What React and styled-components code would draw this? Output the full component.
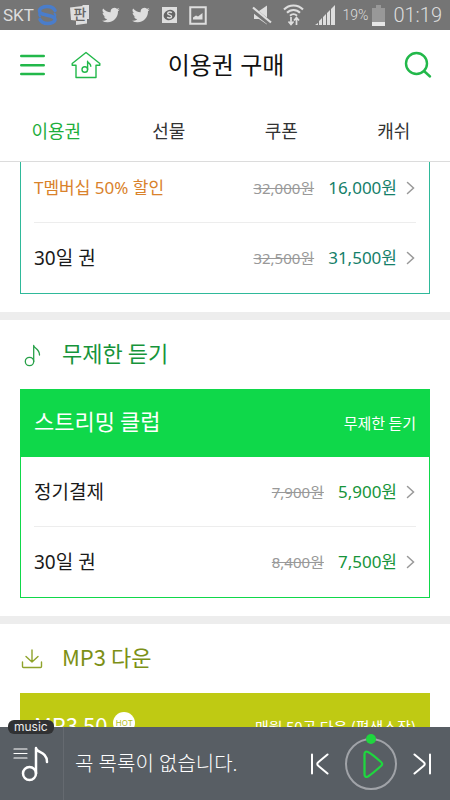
import React from "react";
import styled, { createGlobalStyle } from "styled-components";

const GlobalStyle = createGlobalStyle`
  *, *::before, *::after { box-sizing: border-box; }
  body {
    margin: 0;
    background: #fff;
    color: #1a1a1a;
    font-family: "Noto Sans", "Noto Sans CJK KR", sans-serif;
  }
  button { border: 0; padding: 0; background: none; font: inherit; color: inherit; cursor: pointer; }
  a { color: inherit; text-decoration: none; }
  h1, h2, h3, ul { margin: 0; padding: 0; font: inherit; }
  svg { display: block; flex: none; }
`;

const Screen = styled.div`
  display: flex;
  flex-direction: column;
  height: 100vh;
`;

const StatusBar = styled.div`
  display: flex;
  flex: none;
  align-items: center;
  justify-content: space-between;
  height: 30px;
  padding: 0 8px 0 3px;
  background: #757575;
  color: #dedede;
  font-family: Roboto, sans-serif;
  line-height: 20px;
`;

const StatusGroup = styled.div`
  display: flex;
  align-items: center;
  gap: ${(p) => p.$gap}px;
`;

const Carrier = styled.span`
  font-size: 17px;
`;

const BatteryLevel = styled.span`
  margin-left: 4px;
  font-size: 14px;
  font-weight: 300;
`;

const Clock = styled.time`
  margin-left: 4px;
  font-size: 20px;
  font-weight: 300;
`;

const Header = styled.header`
  flex: none;
  border-bottom: 1px solid #dcdcdc;
`;

const TitleBar = styled.div`
  display: grid;
  grid-template-columns: 1fr auto 1fr;
  align-items: center;
  height: 70px;
  padding: 0 18px 0 20px;
`;

const TitleActions = styled.div`
  display: flex;
  align-items: center;
  justify-content: ${(p) => (p.$end ? "flex-end" : "flex-start")};
  gap: 26px;
`;

const PageTitle = styled.h1`
  font-size: 24px;
  line-height: 32px;
  color: #111;
`;

const Tabs = styled.nav`
  display: grid;
  grid-template-columns: repeat(4, 1fr);
  height: 61px;
  padding-bottom: 2px;
`;

const Tab = styled.a`
  display: flex;
  align-items: center;
  justify-content: center;
  font-size: 18px;
  color: ${(p) => (p.$active ? "#1eae3c" : "#333")};
`;

const Content = styled.main`
  flex: 1;
  min-height: 0;
  overflow-y: auto;
  scrollbar-width: none;
`;

const Section = styled.section`
  padding: 0 20px 18px;
  margin-top: ${(p) => (p.$scrolled ? "-10px" : "0")};
  border-bottom: 8px solid #ededed;
`;

const SectionTitle = styled.h2`
  display: flex;
  align-items: center;
  gap: 18px;
  height: 69px;
  color: ${(p) => p.$color};
`;

const Card = styled.div`
  border: 1px solid ${(p) => p.$color};
`;

const CardHeader = styled.div`
  display: flex;
  align-items: center;
  justify-content: space-between;
  height: 67px;
  padding: 0 13px 2px;
  background: ${(p) => p.$color};
  color: #fff;
`;

const CardName = styled.h3`
  display: flex;
  align-items: center;
  gap: 6px;
`;

const HeadingText = styled.span`
  padding-bottom: 6px;
  font-family: "Noto Sans CJK KR", sans-serif;
  font-size: 22px;
  line-height: 30px;
`;

const CardNote = styled.span`
  font-family: "Noto Sans CJK KR", sans-serif;
  font-size: 15px;
  line-height: 20px;
`;

const HotBadge = styled.span`
  flex: none;
  width: 22px;
  height: 22px;
  margin-bottom: 8px;
  border-radius: 50%;
  background: #fff;
  color: #b3bd1c;
  font-family: Inter, sans-serif;
  font-size: 8px;
  line-height: 22px;
  text-align: center;
`;

const PlanList = styled.ul`
  padding: 0 13px;
  list-style: none;
`;

const PlanItem = styled.li`
  & + & { border-top: 1px solid #ededed; }
`;

const PlanLink = styled.a`
  display: flex;
  align-items: center;
  height: 70px;
  ${PlanItem}:first-child & { height: 69px; }
`;

const PlanName = styled.span`
  flex: 1;
  font-size: ${(p) => (p.$promo ? 17 : 19)}px;
  line-height: 28px;
  color: ${(p) => (p.$promo ? "#d9822b" : "#1a1a1a")};
`;

const OldPrice = styled.del`
  margin-right: 14px;
  font-size: 15px;
  line-height: 22px;
  color: #999;
`;

const Price = styled.strong`
  margin-right: 8px;
  font-size: 17px;
  font-weight: 400;
  line-height: 24px;
  color: ${(p) => p.$color};
`;

const Player = styled.footer`
  position: relative;
  display: flex;
  flex: none;
  align-items: center;
  height: 73px;
  background: #585e64;
  color: #fff;
`;

const PlaylistButton = styled.button`
  display: flex;
  align-items: center;
  justify-content: center;
  width: 64px;
  height: 100%;
  padding-right: 2px;
  border-right: 1px solid #656a70;
`;

const MusicTag = styled.span`
  position: absolute;
  left: 8px;
  top: -7px;
  height: 14px;
  padding: 0 6px;
  border-radius: 6px;
  background: #303133;
  color: #eee;
  font-family: Inter, sans-serif;
  font-size: 12px;
  line-height: 13px;
`;

const NowPlaying = styled.p`
  flex: 1;
  margin: 0 0 0 11px;
  font-size: 20px;
  font-weight: 300;
  line-height: 28px;
`;

const Controls = styled.div`
  display: flex;
  align-items: center;
  gap: 14px;
  padding-right: 18px;
`;

function TwitterIcon() {
  return (
    <svg width="18" height="16" viewBox="0 0 24 20" fill="#dedede">
      <path d="M23.6 2.5a9.600 9.600 0 0 1-2.800.8A4.900 4.900 0 0 0 23 .6a9.800 9.800 0 0 1-3.100 1.200A4.900 4.900 0 0 0 11.600 6.300 13.900 13.900 0 0 1 1.500 1.200a4.900 4.900 0 0 0 1.500 6.500 4.800 4.800 0 0 1-2.200-.6c0 2.400 1.600 4.400 3.900 4.900-.7.200-1.500.2-2.200.1a4.900 4.900 0 0 0 4.600 3.400A9.900 9.900 0 0 1 0 17.500a13.900 13.900 0 0 0 7.500 2.200c9.200 0 14.200-7.700 13.800-14.700.9-.7 1.700-1.500 2.300-2.500z" />
    </svg>
  );
}

function SyncIcon() {
  return (
    <svg width="21" height="22" viewBox="0 0 21 22" fill="none" stroke="#4a7dcb" strokeWidth="3.500" strokeLinecap="round">
      <path d="M18 6.500C16.500 3.500 13.500 2.500 10.500 2.500c-4.500 0-8 1.800-8 4.500 0 2.500 3 3 7 4s8.500 1.500 8.500 4.500c0 2.500-3.500 4-7.500 4-3 0-6-1-7.500-4" />
      <path d="M17.500 9.500c1 1 1 2.500.5 3.500M3 12.500c-1-1-1-2.500-.5-3.500" strokeWidth="2" />
    </svg>
  );
}

function FanIcon() {
  return (
    <svg width="20" height="20" viewBox="0 0 20 20">
      <path d="M0 2.500L12.500 1V0H19v14h-2v4.500L6 20v-4.500L1 15z" fill="#dedede" />
      <text x="10" y="14" textAnchor="middle" fontFamily="Noto Sans CJK KR" fontSize="14" fontWeight="500" fill="#666">판</text>
    </svg>
  );
}

function CoinIcon() {
  return (
    <svg width="15" height="16" viewBox="0 0 15 16">
      <rect width="15" height="16" fill="#dedede" />
      <ellipse cx="7.500" cy="8" rx="6" ry="5" fill="#666" transform="rotate(-25 7.500 8)" />
      <path d="M9.800 5.800C9 4.700 5.800 4.600 5.700 6.400c0 1.800 4 1.200 3.900 3.200-.1 1.800-3.400 1.800-4.300.4" fill="none" stroke="#dedede" strokeWidth="1.400" />
    </svg>
  );
}

function GalleryIcon() {
  return (
    <svg width="18" height="19" viewBox="0 0 18 19">
      <rect x="1.250" y="1.250" width="15.500" height="16.500" fill="none" stroke="#dedede" strokeWidth="2" />
      <path d="M4 13.500v-2l3-2 2 1L13.500 7v6.500z" fill="#dedede" />
    </svg>
  );
}

function MuteIcon() {
  return (
    <svg width="20" height="20" viewBox="0 0 20 20">
      <path d="M2 6h5l8-5.500v19L7 14H2z" fill="#dedede" />
      <path d="M0 4l19 15" stroke="#757575" strokeWidth="5" />
      <path d="M1 2.500l18 15" stroke="#dedede" strokeWidth="2.200" />
    </svg>
  );
}

function WifiIcon() {
  return (
    <svg width="21" height="22" viewBox="0 0 21 22" fill="none" stroke="#dedede" strokeWidth="2">
      <path d="M1 5.500C6 0 15 0 20 5.500M4 8.800c3.500-3.800 9.500-3.800 13 0M7 11.800c2-2 5-2 7 0" />
      <path d="M8 13v7M5.500 17.500L8 20.500l2.500-3M13.500 21v-7M11 16.500l2.500-3 2.500 3" strokeWidth="1.700" />
    </svg>
  );
}

function SignalIcon() {
  return (
    <svg width="20" height="20" viewBox="0 0 20 20" fill="#dedede">
      <path d="M0 20l3-2v2zM4 20v-4l3-3v7zM8 20v-8l3-3v11zM12 20V8l3-3v15zM16 20V4l4-4v20z" />
    </svg>
  );
}

function BatteryIcon() {
  return (
    <svg width="13" height="21" viewBox="0 0 13 21">
      <path d="M0 3h4V0h5v3h4v18H0z" fill="#989898" />
      <path d="M0 17h13v4H0z" fill="#e6e6e6" />
    </svg>
  );
}

function MenuIcon() {
  return (
    <svg width="25" height="24" viewBox="0 0 25 24" stroke="#22b84a" strokeWidth="2.500" strokeLinecap="round">
      <path d="M1.250 3h22.500M1.250 12.200h22.500M1.250 21h22.500" />
    </svg>
  );
}

function HomeIcon() {
  return (
    <svg width="30" height="28" viewBox="0 0 30 28" fill="none" stroke="#22b84a" strokeWidth="1.400" strokeLinejoin="round" strokeLinecap="round">
      <path d="M15 1.500L1.200 12.500v1.800H5V26.500h20V14.300h3.800v-1.800z" />
      <circle cx="13.800" cy="18.500" r="2.800" />
      <path d="M16.600 18.500V10.200c.2 2 3.200 2 3.200 5" />
    </svg>
  );
}

function SearchIcon() {
  return (
    <svg width="28" height="28" viewBox="0 0 28 28" fill="none" stroke="#22b84a" strokeWidth="2.400" strokeLinecap="round">
      <circle cx="12.500" cy="12.500" r="10.500" />
      <path d="M20 20l6 5.500" />
    </svg>
  );
}

function ChevronIcon() {
  return (
    <svg width="11" height="14" viewBox="0 0 11 14" fill="none" stroke="#999" strokeWidth="1.500" strokeLinecap="round">
      <path d="M2.500 1.500L8.500 7l-6 5.500" />
    </svg>
  );
}

function NoteIcon() {
  return (
    <svg width="24" height="24" viewBox="0 0 24 24" fill="none" stroke="#27a048" strokeWidth="1.300" strokeLinecap="round" strokeLinejoin="round">
      <circle cx="9.500" cy="18.500" r="4.200" />
      <path d="M13.700 18.500V2.500c.3 3 5.800 3 5.800 9.500" />
    </svg>
  );
}

function DownloadIcon() {
  return (
    <svg width="24" height="20" viewBox="0 0 24 20" fill="none" stroke="#8fa32b" strokeWidth="1.400" strokeLinecap="round" strokeLinejoin="round">
      <path d="M12 1v12M6 7.500l6 5.500 6-5.500M2.500 13v4.500q0 1 1 1h17q1 0 1-1V13" />
    </svg>
  );
}

function PlaylistIcon() {
  return (
    <svg width="36" height="36" viewBox="0 0 36 36" fill="none" stroke="#fff" strokeLinecap="round" strokeLinejoin="round">
      <path d="M1 3h13M1 7.500h13M1 12h13" strokeWidth="1.200" />
      <circle cx="16.500" cy="27.500" r="6.500" strokeWidth="2.500" />
      <path d="M23 27.500V2c0 5 11 3 11 14" strokeWidth="2.500" />
    </svg>
  );
}

function PreviousIcon() {
  return (
    <svg width="20" height="22" viewBox="0 0 20 22" fill="none" stroke="#fff" strokeWidth="2" strokeLinecap="round" strokeLinejoin="round">
      <path d="M2 1.500v19M17.500 1.500L8.500 9q-2.500 2 0 4l9 7.500" />
    </svg>
  );
}

function NextIcon() {
  return (
    <svg width="20" height="22" viewBox="0 0 20 22" fill="none" stroke="#fff" strokeWidth="2" strokeLinecap="round" strokeLinejoin="round">
      <path d="M18 1.500v19M2.500 1.500L11.500 9q2.500 2 0 4l-9 7.500" />
    </svg>
  );
}

function PlayIcon() {
  return (
    <svg width="54" height="62" viewBox="0 0 54 62" fill="none">
      <circle cx="27" cy="31" r="25" stroke="#a0a3a8" strokeWidth="2" />
      <circle cx="27" cy="6" r="5" fill="#1fd63f" />
      <path d="M20.500 21.500q0-4 3.500-2.500 4 2 13 10 2.300 2 0 4-9 8-13 10.500-3.500 1.500-3.500-2.500z" stroke="#1fd63f" strokeWidth="2.300" strokeLinejoin="round" />
    </svg>
  );
}

function PlanCard({ color, priceColor, name, note, hot, plans = [] }) {
  return (
    <Card $color={color}>
      {name && (
        <CardHeader $color={color}>
          <CardName>
            <HeadingText>{name}</HeadingText>
            {hot && <HotBadge>HOT</HotBadge>}
          </CardName>
          <CardNote>{note}</CardNote>
        </CardHeader>
      )}
      {plans.length > 0 && (
        <PlanList>
          {plans.map((plan) => (
            <PlanItem key={plan.name}>
              <PlanLink href="#">
                <PlanName $promo={plan.promo}>{plan.name}</PlanName>
                <OldPrice>{plan.oldPrice}</OldPrice>
                <Price $color={priceColor}>{plan.price}</Price>
                <ChevronIcon />
              </PlanLink>
            </PlanItem>
          ))}
        </PlanList>
      )}
    </Card>
  );
}

const tabs = ["이용권", "선물", "쿠폰", "캐쉬"];

const bundlePlans = [
  { name: "T멤버십 50% 할인", oldPrice: "32,000원", price: "16,000원", promo: true },
  { name: "30일 권", oldPrice: "32,500원", price: "31,500원" },
];

const streamingPlans = [
  { name: "정기결제", oldPrice: "7,900원", price: "5,900원" },
  { name: "30일 권", oldPrice: "8,400원", price: "7,500원" },
];

export default function App() {
  return (
    <Screen>
      <GlobalStyle />
      <StatusBar>
        <StatusGroup $gap={12}>
          <StatusGroup $gap={3}>
            <Carrier>SKT</Carrier>
            <SyncIcon />
          </StatusGroup>
          <FanIcon />
          <TwitterIcon />
          <TwitterIcon />
          <CoinIcon />
          <GalleryIcon />
        </StatusGroup>
        <StatusGroup $gap={4}>
          <StatusGroup $gap={11}>
            <MuteIcon />
            <WifiIcon />
            <SignalIcon />
          </StatusGroup>
          <BatteryLevel>19%</BatteryLevel>
          <BatteryIcon />
          <Clock>01:19</Clock>
        </StatusGroup>
      </StatusBar>

      <Header>
        <TitleBar>
          <TitleActions>
            <button type="button" aria-label="메뉴"><MenuIcon /></button>
            <button type="button" aria-label="홈"><HomeIcon /></button>
          </TitleActions>
          <PageTitle>이용권 구매</PageTitle>
          <TitleActions $end>
            <button type="button" aria-label="검색"><SearchIcon /></button>
          </TitleActions>
        </TitleBar>
        <Tabs>
          {tabs.map((tab, i) => (
            <Tab key={tab} href="#" $active={i === 0}>{tab}</Tab>
          ))}
        </Tabs>
      </Header>

      <Content>
        <Section $scrolled>
          <PlanCard color="#2fb99a" priceColor="#15806a" plans={bundlePlans} />
        </Section>
        <Section>
          <SectionTitle $color="#16943a">
            <NoteIcon />
            <HeadingText>무제한 듣기</HeadingText>
          </SectionTitle>
          <PlanCard color="#0fd84a" priceColor="#16943a" name="스트리밍 클럽" note="무제한 듣기" plans={streamingPlans} />
        </Section>
        <Section>
          <SectionTitle $color="#7c9016">
            <DownloadIcon />
            <HeadingText>MP3 다운</HeadingText>
          </SectionTitle>
          <PlanCard color="#bfca13" name="MP3 50" hot note="매월 50곡 다운 (평생소장)" />
        </Section>
      </Content>

      <Player>
        <PlaylistButton type="button" aria-label="재생목록"><PlaylistIcon /></PlaylistButton>
        <MusicTag>music</MusicTag>
        <NowPlaying>곡 목록이 없습니다.</NowPlaying>
        <Controls>
          <button type="button" aria-label="이전 곡"><PreviousIcon /></button>
          <button type="button" aria-label="재생"><PlayIcon /></button>
          <button type="button" aria-label="다음 곡"><NextIcon /></button>
        </Controls>
      </Player>
    </Screen>
  );
}
